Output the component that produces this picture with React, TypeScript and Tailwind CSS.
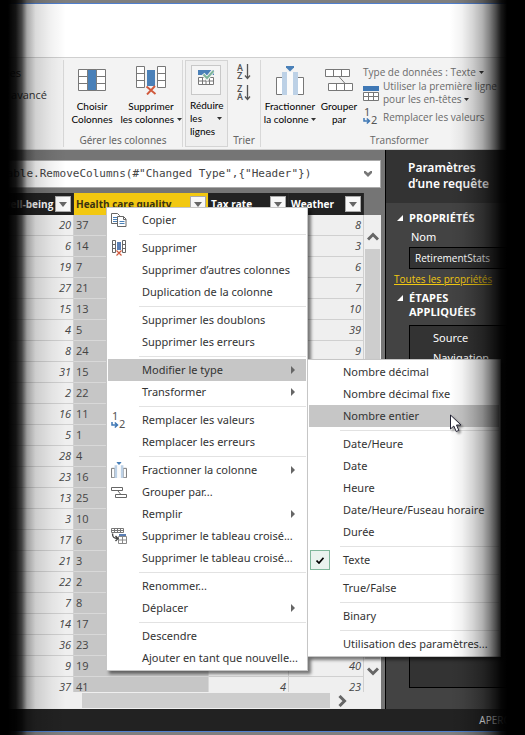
import type { ReactNode } from "react";

const sans = "font-['Open_Sans','Noto_Sans',sans-serif]";
const compact = "font-['Lato','Open_Sans',sans-serif] text-[10px] leading-[13px]";

function Caret({ className = "" }: { className?: string }) {
  return (
    <svg viewBox="0 0 5 3" className={`inline-block h-[3px] w-[5px] shrink-0 fill-[#333] ${className}`} aria-hidden="true">
      <path d="M0 0h5L2.500 3z" />
    </svg>
  );
}

function ChooseColumnsIcon() {
  return (
    <svg viewBox="0 0 28 22" className="h-[22px] w-7" aria-hidden="true">
      <path d="M.5.5h27v21H.5z" fill="#fff" stroke="#777" />
      <path d="M.5 7.500h27M.5 14.500h27" stroke="#777" />
      <path d="M9 1h10v20H9z" fill="#4a80b8" />
      <path d="M9.500 0v22M18.500 0v22" stroke="#7d7d7d" />
    </svg>
  );
}

function RemoveColumnsIcon() {
  return (
    <svg viewBox="0 0 30 29" className="h-[29px] w-[30px]" aria-hidden="true">
      <g fill="#fff" stroke="#777">
        <path d="M.5.5h8v21h-8zM21.500.5h8v21h-8z" />
        <path d="M.5 7.500h8M.5 14.500h8M21.500 7.500h8M21.500 14.500h8" />
      </g>
      <path d="M11 4h8v16h-8z" fill="#4a80b8" />
      <path d="M10.500 20.500l9 7.500M19 20l-8 8.500" stroke="#d0593c" strokeWidth="1.900" />
    </svg>
  );
}

function ReduceRowsIcon() {
  return (
    <svg viewBox="0 0 17 16" className="h-4 w-[17px]" aria-hidden="true">
      <path d="M0 0h16v5H0z" fill="#4a80b8" />
      <path d="M.5 7.500h15v7H.5zM.5 11h15M4.500 7v8M8 7v8M11.500 7v8" fill="#fff" stroke="#777" />
      <path d="M5 4l4 4.500L15.500.5" fill="none" stroke="#f2f2f2" strokeWidth="4" />
      <path d="M5.500 4.500L9 8l6.500-7" fill="none" stroke="#7cb49a" strokeWidth="2" />
    </svg>
  );
}

function SortIcon({ top, bottom }: { top: string; bottom: string }) {
  return (
    <svg viewBox="0 0 14 17" className="h-[17px] w-[14px] overflow-visible" aria-hidden="true">
      <g fill="#555" className="font-['Roboto',sans-serif] text-[9px] font-medium">
        <text x="0" y="7">{top}</text>
        <text x="0" y="15">{bottom}</text>
      </g>
      <path d="M10.500 0v14M8 11.500l2.500 3 2.500-3" fill="none" stroke="#555" strokeWidth="1.300" />
    </svg>
  );
}

function SplitIcon({ small = false }: { small?: boolean }) {
  return (
    <svg viewBox="0 0 28 29" className={small ? "h-4 w-4" : "h-[29px] w-7"} aria-hidden="true">
      <g fill="#fff" stroke="#777" strokeWidth={small ? 1.800 : 1}>
        <path d="M.5 11.500h6v17h-6zM21.500 11.500h6v17h-6z" />
      </g>
      <path d="M6 6h5v23H6zM17 6h5v23h-5z" fill="#bdd1e6" />
      <path d="M11 6h6v23h-6z" fill="#fafafa" />
      <path d="M10 0h8v1.500L14 5.500l-4-4z" fill="#4a80b8" />
    </svg>
  );
}

function GroupIcon() {
  return (
    <svg viewBox="0 0 28 22" className="h-[22px] w-7" aria-hidden="true">
      <path d="M13.500 7l7 8" stroke="#777" />
      <path d="M.5.5h24v7H.5zM3.500 14.500h24v7h-24zM8.500.5v7M16.500.5v7M11.500 14.500v7M19.500 14.500v7" fill="#fff" stroke="#777" />
    </svg>
  );
}

function GroupSmallIcon() {
  return (
    <svg viewBox="0 0 16 11" className="h-[11px] w-4" aria-hidden="true">
      <path d="M.5.5h11v3H.5zM4.500 7.500h11v3h-11zM7 4l2.500 3" fill="#fff" stroke="#666" />
    </svg>
  );
}

function HeaderRowIcon() {
  return (
    <svg viewBox="0 0 16 15" className="h-[15px] w-4 shrink-0" aria-hidden="true">
      <path d="M0 0h16v5H0z" fill="#3f78b5" />
      <path d="M.5 6.500h15v8H.5zM.5 10.500h15M5.500 6.500v8M10.500 6.500v8" fill="#fff" stroke="#777" />
    </svg>
  );
}

function ReplaceIcon() {
  return (
    <svg viewBox="0 0 16 17" className="h-[17px] w-4 shrink-0 overflow-visible" aria-hidden="true">
      <g fill="#555" className="font-['Noto_Sans',sans-serif] text-[11px]">
        <text x="1" y="8">1</text>
        <text x="8" y="16">2</text>
      </g>
      <path d="M1 10v3h5M3.800 10.500L6.500 13l-2.700 2.500" fill="none" stroke="#3f78b5" strokeWidth="1.500" />
    </svg>
  );
}

function CopyIcon() {
  return (
    <svg viewBox="0 0 16 14" className="h-[14px] w-4" aria-hidden="true">
      <path d="M.5.5h6l2 2v8h-8z" fill="#fff" stroke="#666" />
      <path d="M2 4.500h4M2 6.500h4M2 8.500h4" stroke="#4a80b8" />
      <path d="M6.500 3.500h6l2.500 2.500v7.500H6.500z" fill="#fff" stroke="#666" />
      <path d="M12.500 3.500v3H15" fill="none" stroke="#666" />
      <path d="M8.500 8.500h5M8.500 10.500h5" stroke="#4a80b8" />
    </svg>
  );
}

function RemoveSmallIcon() {
  return (
    <svg viewBox="0 0 14 16" className="h-4 w-[14px]" aria-hidden="true">
      <path d="M.5.5h3v12h-3zM10.500.5h3v12h-3zM.5 4.500h3M.5 8.500h3M10.500 4.500h3M10.500 8.500h3" fill="#fff" stroke="#666" />
      <path d="M5 2h4v8H5z" fill="#5b7fb5" />
      <path d="M4.500 10.500l5 5M9.500 10.500l-5 5" stroke="#d0593c" strokeWidth="1.200" />
    </svg>
  );
}

function UnpivotIcon() {
  return (
    <svg viewBox="0 0 16 16" className="h-4 w-4" aria-hidden="true">
      <path d="M.5.5h12v4H.5zM.5 2.500h12M3.500.5v4M6.500.5v4M9.500.5v4" fill="#fff" stroke="#777" />
      <path d="M7.500 8.500h8v7h-8zM7.500 12h8M11.500 8.500v7" fill="#fff" stroke="#888" />
      <path d="M8 6h7v2H8z" fill="#5b7fb5" />
      <path d="M1.500 5.500c0 4 1.500 5 5 5M4.500 8l2.500 2.500L4.500 13" fill="none" stroke="#444" strokeWidth="1.400" />
    </svg>
  );
}

function BigButton({ icon, children, className = "" }: { icon: ReactNode; children: ReactNode; className?: string }) {
  return (
    <button type="button" className={`flex flex-col items-center whitespace-nowrap text-black ${className}`}>
      <span className="flex h-10 items-center">{icon}</span>
      <span className={`text-center ${compact}`}>{children}</span>
    </button>
  );
}

function GroupLabel({ children }: { children: ReactNode }) {
  return <div className="mt-auto text-center font-['Noto_Sans',sans-serif] text-[10px] leading-[14px] text-[#666]">{children}</div>;
}

function Ribbon() {
  return (
    <div className="flex h-[93px] shrink-0 overflow-hidden border-y border-[#cfcfcf] bg-[#f3f3f3] py-0.5">
      <div className="flex w-16 shrink-0 flex-col border-r border-[#d8d8d8] pr-4 pt-0.5 text-right text-[11px] leading-[22px] text-[#333]">
        <button type="button" className="pr-[26px] text-right">es</button>
        <button type="button" className="text-right">avancé</button>
      </div>
      <div className="flex w-[119px] shrink-0 flex-col border-r border-[#d8d8d8]">
        <div className="flex">
          <BigButton icon={<ChooseColumnsIcon />} className="w-14">
            Choisir<br />Colonnes
          </BigButton>
          <BigButton icon={<RemoveColumnsIcon />} className="w-[62px]">
            Supprimer<br />les colonnes <Caret className="mb-0.5" />
          </BigButton>
        </div>
        <GroupLabel>Gérer les colonnes</GroupLabel>
      </div>
      <div className="flex w-[78px] shrink-0 border-r border-[#d8d8d8] pl-0.5">
        <button type="button" className={`flex w-[43px] flex-col border border-[#d4d4d4] bg-[#efefef] pl-1 text-left ${compact}`}>
          <span className="mb-1 ml-px mt-1 flex h-[30px] w-[30px] items-start justify-center border border-[#c8c8c8] bg-[#f5f5f5] pt-1">
            <ReduceRowsIcon />
          </span>
          <span>Réduire</span>
          <span className="flex w-8 items-center justify-between">les <Caret /></span>
          <span>lignes</span>
        </button>
        <div className="flex grow flex-col items-center pt-1">
          <button type="button" aria-label="A-Z"><SortIcon top="A" bottom="Z" /></button>
          <button type="button" aria-label="Z-A" className="mt-1"><SortIcon top="Z" bottom="A" /></button>
          <GroupLabel>Trier</GroupLabel>
        </div>
      </div>
      <div className="flex grow flex-col">
        <div className="flex">
          <BigButton icon={<SplitIcon />} className="w-[58px]">
            Fractionner<br />la colonne <Caret className="mb-0.5" />
          </BigButton>
          <BigButton icon={<GroupIcon />} className="w-10">
            Grouper<br />par
          </BigButton>
          <div className="ml-1 flex flex-col items-start whitespace-nowrap text-[10px] text-[#6a6a6a]">
            <button type="button" className="mt-1 leading-4">
              Type de données : Texte <Caret className="mb-0.5" />
            </button>
            <button type="button" className="flex items-center gap-1 text-left leading-[13px]">
              <HeaderRowIcon />
              <span>Utiliser la première ligne<br />pour les en-têtes <Caret className="mb-0.5" /></span>
            </button>
            <button type="button" className="mt-0.5 flex items-center gap-1 leading-4">
              <ReplaceIcon />Remplacer les valeurs
            </button>
          </div>
        </div>
        <div className="mt-auto pl-[109px] text-[10px] leading-[14px] text-[#666]">Transformer</div>
      </div>
    </div>
  );
}

const rows: [number, number, string, string][] = [
  [20, 37, "", "8"], [6, 14, "", "3"], [19, 7, "", "6"], [27, 21, "", "7"], [15, 13, "", "10"],
  [4, 5, "", "39"], [8, 24, "", "9"], [31, 15, "", ""], [2, 22, "", ""], [16, 11, "", ""],
  [5, 1, "", ""], [28, 4, "", ""], [23, 16, "", ""], [13, 25, "", ""], [3, 10, "", ""],
  [17, 6, "", ""], [21, 3, "", ""], [22, 2, "", ""], [7, 8, "", ""], [14, 17, "", ""],
  [36, 23, "", ""], [9, 19, "", "40"], [37, 41, "4", "23"],
];

function HeadCell({ label, selected = false }: { label: string; selected?: boolean }) {
  return (
    <th className={`h-[22px] border-r border-[#2a2a2a] p-0 ${selected ? "bg-[#f2c811] text-[#3a3210]" : "bg-[#222] text-white"}`}>
      <div className="flex h-[22px] items-center justify-between px-0.5">
        <span className="text-[10px] font-bold leading-4">{label}</span>
        <button type="button" aria-label={label} className="flex h-4 w-4 shrink-0 items-center justify-center border border-[#aaa] bg-[#f8f8f8]">
          <svg viewBox="0 0 8 5" className="h-[5px] w-2 fill-[#666]" aria-hidden="true"><path d="M0 0h8L4 5z" /></svg>
        </button>
      </div>
    </th>
  );
}

function Grid() {
  const cell = "h-[21px] border-b border-r border-[#d0d0d0] px-0.5 py-0 text-right italic";
  return (
    <div className="flex min-h-0 grow flex-col overflow-hidden">
      <div className="flex min-h-0 grow overflow-hidden">
        <div className="min-w-0 grow overflow-hidden">
          <table className="w-full table-fixed border-separate border-spacing-0 bg-[#efefef] text-[11px] leading-4 text-[#444]">
            <colgroup>
              <col />
              <col className="w-[135px]" />
              <col className="w-20" />
              <col className="w-[75px]" />
            </colgroup>
            <thead>
              <tr className="whitespace-nowrap text-left">
                <HeadCell label="well-being" />
                <HeadCell label="Health care quality" selected />
                <HeadCell label="Tax rate" />
                <HeadCell label="Weather" />
              </tr>
            </thead>
            <tbody>
              {rows.map((r, i) => (
                <tr key={i}>
                  <td className={cell}>{r[0]}</td>
                  <td className="h-[21px] border-b border-r border-[#d8d8d8] bg-[#c6c6c6] px-0.5 py-0">{r[1]}</td>
                  <td className={cell}>{r[2]}</td>
                  <td className={cell}>{r[3]}</td>
                </tr>
              ))}
            </tbody>
          </table>
        </div>
        <div className="mt-[22px] flex w-[17px] shrink-0 flex-col items-center bg-[#efefef]">
          <svg viewBox="0 0 12 9" className="mb-2 mt-[17px] h-[9px] w-3 shrink-0" aria-hidden="true">
            <path d="M1 7.500l5-5 5 5" fill="none" stroke="#666" strokeWidth="3" />
          </svg>
          <div className="w-[15px] grow bg-[#cdcdcd]" />
          <svg viewBox="0 0 12 9" className="mb-4 mt-2 h-[9px] w-3 shrink-0" aria-hidden="true">
            <path d="M1 1.500l5 5 5-5" fill="none" stroke="#666" strokeWidth="3" />
          </svg>
        </div>
      </div>
      <div className="flex h-[17px] shrink-0 items-center bg-[#efefef] pl-[82px] pr-[34px]">
        <div className="h-[15px] grow bg-[#cdcdcd]" />
        <svg viewBox="0 0 9 12" className="ml-2 h-3 w-[9px] shrink-0" aria-hidden="true">
          <path d="M1.500 1l5 5-5 5" fill="none" stroke="#666" strokeWidth="3" />
        </svg>
      </div>
    </div>
  );
}

function SectionTitle({ children }: { children: ReactNode }) {
  return (
    <h3 className="flex items-start text-[11px] font-bold leading-[14px] text-white">
      <svg viewBox="0 0 6 6" className="mr-1.5 mt-1 h-1.5 w-1.5 shrink-0 fill-white" aria-hidden="true"><path d="M6 0v6H0z" /></svg>
      <span>{children}</span>
    </h3>
  );
}

function SettingsPanel() {
  return (
    <aside className="flex w-[140px] shrink-0 flex-col overflow-hidden border-l border-black bg-[#434343] text-white">
      <h2 className="h-[53px] shrink-0 bg-[#333] pl-[22px] pt-2.5 font-['Noto_Sans',sans-serif] text-[12px] font-semibold leading-4">
        Paramètres<br />d’une requête
      </h2>
      <div className="flex min-h-0 grow flex-col pl-2 pt-2">
        <div className="pl-[3px]">
          <SectionTitle>PROPRIÉTÉS</SectionTitle>
        </div>
        <label htmlFor="query-name" className="mt-1 pl-[17px] font-['Noto_Sans',sans-serif] text-[11px] leading-4">Nom</label>
        <input id="query-name" defaultValue="RetirementStats" className="ml-[15px] mt-0.5 h-[22px] w-28 shrink-0 border border-black bg-[#333] px-[5px] text-[10px] leading-4 text-white" />
        <a href="#proprietes" className="mt-0.5 whitespace-nowrap text-[10px] leading-4 text-[#f2c811] underline">Toutes les propriétés</a>
        <div className="mt-1 pl-[3px]">
          <SectionTitle>ÉTAPES<br />APPLIQUÉES</SectionTitle>
        </div>
        <ul className="mb-[21px] ml-[15px] mt-1.5 w-32 grow border border-black bg-[#333] pl-[23px] pt-0.5 font-['Noto_Sans',sans-serif] text-[11px] leading-5">
          <li>Source</li>
          <li>Navigation</li>
        </ul>
      </div>
    </aside>
  );
}

type Entry = { label: string; icon?: ReactNode; sub?: boolean; active?: boolean } | null;

const mainEntries: Entry[] = [
  { label: "Copier", icon: <CopyIcon /> },
  null,
  { label: "Supprimer", icon: <RemoveSmallIcon /> },
  { label: "Supprimer d’autres colonnes" },
  { label: "Duplication de la colonne" },
  null,
  { label: "Supprimer les doublons" },
  { label: "Supprimer les erreurs" },
  null,
  { label: "Modifier le type", sub: true, active: true },
  { label: "Transformer", sub: true },
  null,
  { label: "Remplacer les valeurs", icon: <ReplaceIcon /> },
  { label: "Remplacer les erreurs" },
  null,
  { label: "Fractionner la colonne", icon: <SplitIcon small />, sub: true },
  { label: "Grouper par...", icon: <GroupSmallIcon /> },
  { label: "Remplir", sub: true },
  { label: "Supprimer le tableau croisé...", icon: <UnpivotIcon /> },
  { label: "Supprimer le tableau croisé..." },
  null,
  { label: "Renommer..." },
  { label: "Déplacer", sub: true },
  null,
  { label: "Descendre" },
  { label: "Ajouter en tant que nouvelle..." },
];

const checkIcon = (
  <span className="flex h-5 w-5 items-center justify-center border border-[#7fb79b] bg-[#e9f3ee]">
    <svg viewBox="0 0 8 7" className="h-[7px] w-2" aria-hidden="true"><path d="M.5 3.500l2.500 2.500L7.500.8" fill="none" stroke="#000" strokeWidth="1.700" /></svg>
  </span>
);

const typeEntries: Entry[] = [
  { label: "Nombre décimal" },
  { label: "Nombre décimal fixe" },
  { label: "Nombre entier", active: true },
  null,
  { label: "Date/Heure" },
  { label: "Date" },
  { label: "Heure" },
  { label: "Date/Heure/Fuseau horaire" },
  { label: "Durée" },
  null,
  { label: "Texte", icon: checkIcon },
  null,
  { label: "True/False" },
  null,
  { label: "Binary" },
  null,
  { label: "Utilisation des paramètres..." },
];

function Menu({ entries, className }: { entries: Entry[]; className: string }) {
  return (
    <div role="menu" className={`absolute border border-[#c6c6c6] bg-white p-px shadow-[3px_3px_3px_rgba(0,0,0,0.5)] ${className}`}>
      {entries.map((e, i) =>
        e === null ? (
          <hr key={i} className="my-0.5 ml-[31px] h-0.5 border-0 border-b border-[#e2e2e2]" />
        ) : (
          <button
            key={i}
            type="button"
            role="menuitem"
            className={`flex h-[22px] w-full items-center whitespace-nowrap pr-[11px] text-left font-['Noto_Sans',sans-serif] text-[11px] leading-4 text-[#333] ${e.active ? "bg-[#c6c6c6]" : ""}`}
          >
            <span className="flex w-[22px] shrink-0 justify-center">{e.icon}</span>
            <span className="ml-3 grow">{e.label}</span>
            {e.sub && (
              <svg viewBox="0 0 4 8" className="h-2 w-1 fill-[#666]" aria-hidden="true"><path d="M0 0l4 4-4 4z" /></svg>
            )}
          </button>
        ),
      )}
    </div>
  );
}

export default function App() {
  return (
    <div className={`relative flex h-screen w-full flex-col overflow-hidden bg-[#7b7b7b] ${sans}`}>
      <div className="h-1 shrink-0 border-b border-[#4f7fcf] bg-[#7f7f7f]" />
      <header className="h-[53px] shrink-0 bg-white" />
      <Ribbon />
      <main className="flex min-h-0 grow overflow-hidden">
        <div className="flex min-w-0 grow flex-col bg-[#757575] pr-1">
          <div className="mb-[5px] mt-2.5 flex h-[28px] shrink-0 items-center border-y border-r border-[#aaa] bg-white pr-2">
            <input
              aria-label="Formule"
              defaultValue={'Table.RemoveColumns(#"Changed Type",{"Header"})'}
              className="min-w-0 grow bg-transparent font-['DejaVu_Sans_Mono',monospace] text-[11px] leading-4 text-[#444]"
            />
            <svg viewBox="0 0 8 6" className="h-1.5 w-2 fill-[#777]" aria-hidden="true"><path d="M0 0h1.500L4 2 6.500 0H8v2L4 6 0 2z" /></svg>
          </div>
          <Grid />
        </div>
        <SettingsPanel />
      </main>
      <footer className="flex h-[22px] shrink-0 items-center justify-end overflow-hidden bg-[#222] pr-2 text-[10px] leading-4 text-white">APERÇU</footer>
      <div className="h-1 shrink-0 border-t border-[#4f7fcf] bg-[#7f7f7f]" />

      <Menu entries={mainEntries} className="left-[106px] top-[207px] w-[202px]" />
      <Menu entries={typeEntries} className="left-[307px] top-[359px] w-[194px]" />

      <div className="pointer-events-none absolute inset-y-0 left-0 w-[66px] bg-[linear-gradient(to_right,#000_0,#000_12%,rgba(0,0,0,0.92)_24%,rgba(0,0,0,0.72)_33%,rgba(0,0,0,0.34)_41%,rgba(0,0,0,0.14)_54%,rgba(0,0,0,0.05)_78%,transparent_100%)]" />
      <div className="pointer-events-none absolute inset-y-0 right-0 w-[75px] bg-[linear-gradient(to_right,transparent_0,rgba(0,0,0,0.05)_16%,rgba(0,0,0,0.16)_30%,rgba(0,0,0,0.3)_43%,rgba(0,0,0,0.5)_53%,rgba(0,0,0,0.7)_61%,rgba(0,0,0,0.9)_68%,#000_76%)]" />

      <svg viewBox="0 0 12 19" className="pointer-events-none absolute left-[450px] top-[414px] h-[19px] w-3 drop-shadow-[2px_2px_1px_rgba(0,0,0,0.4)]" aria-hidden="true">
        <path d="M.5 1v14l3.300-3 2.400 5.500 2.600-1.100L6.500 11H11z" fill="#fff" stroke="#223" />
      </svg>
    </div>
  );
}
